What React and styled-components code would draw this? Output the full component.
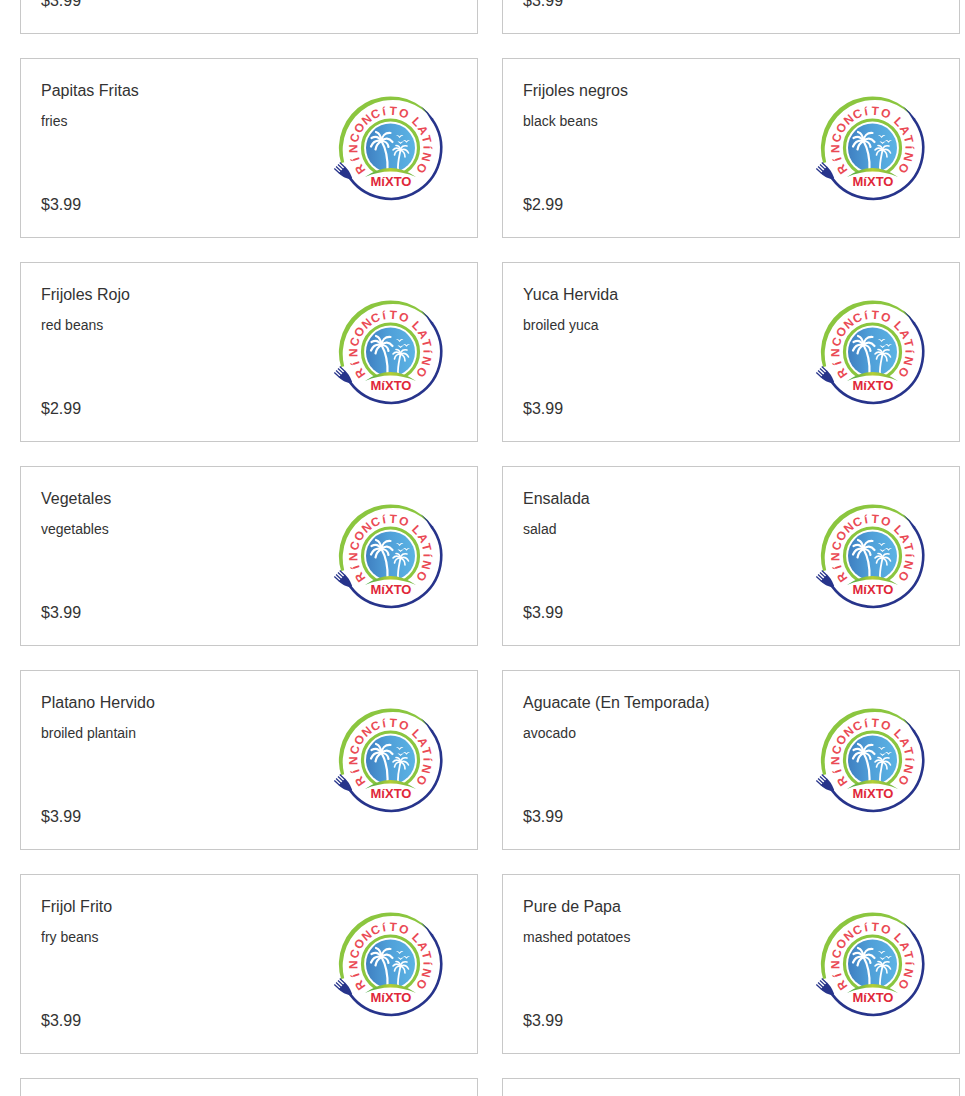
import React from "react";
import styled, { createGlobalStyle } from "styled-components";

const items = [
  { name: "", description: "", price: "$3.99", noLogo: true },
  { name: "", description: "", price: "$3.99", noLogo: true },
  { name: "Papitas Fritas", description: "fries", price: "$3.99" },
  { name: "Frijoles negros", description: "black beans", price: "$2.99" },
  { name: "Frijoles Rojo", description: "red beans", price: "$2.99" },
  { name: "Yuca Hervida", description: "broiled yuca", price: "$3.99" },
  { name: "Vegetales", description: "vegetables", price: "$3.99" },
  { name: "Ensalada", description: "salad", price: "$3.99" },
  { name: "Platano Hervido", description: "broiled plantain", price: "$3.99" },
  { name: "Aguacate (En Temporada)", description: "avocado", price: "$3.99" },
  { name: "Frijol Frito", description: "fry beans", price: "$3.99" },
  { name: "Pure de Papa", description: "mashed potatoes", price: "$3.99" },
  { name: "", description: "", price: "", noLogo: true },
  { name: "", description: "", price: "", noLogo: true },
];

// letter and its angle on the badge, clockwise from the top
const badgeLetters = [
  ["R", -125], ["í", -108], ["N", -91], ["C", -74], ["O", -57],
  ["N", -40], ["C", -24], ["í", -10], ["T", 4], ["O", 21],
  ["L", 45], ["A", 61], ["T", 76], ["í", 89], ["N", 104], ["O", 123],
];

function Logo({ id }) {
  return (
    <LogoSvg viewBox="0 0 120 120" role="img" aria-label="Rinconcito Latino Mixto">
      <defs>
        <linearGradient id={`sky-${id}`} x1="0" y1="0" x2="1" y2="0">
          <stop offset="0" stopColor="#3f7fc1" />
          <stop offset="0.45" stopColor="#4f9fd8" />
          <stop offset="1" stopColor="#5cb3e4" />
        </linearGradient>
        <linearGradient id={`hill-${id}`} x1="0" y1="0" x2="1" y2="0">
          <stop offset="0" stopColor="#3fa648" />
          <stop offset="0.5" stopColor="#b5cf35" />
          <stop offset="1" stopColor="#6cb544" />
        </linearGradient>
      </defs>

      {/* plate */}
      <path d="M10.1 75.1A51.7 51.7 0 0 1 97.9 25.4L97 26.2A50.2 50.2 0 0 0 13.2 74.3Z" fill="#8bc63f" />
      <path d="M89.9 18.2A51.7 51.7 0 0 1 102.4 31.1L100.2 32.5A60 60 0 0 0 89.9 18.2Z" fill="#27348b" />
      <path d="M100.8 31.1A50.4 50.4 0 1 1 16.8 86.7" fill="none" stroke="#27348b" strokeWidth="2.6" />

      {/* fork */}
      <g transform="translate(13 84) rotate(-47)" fill="#27348b">
        <path d="M-4.6 -3H4.6C4.6 3 3 6 1.2 10H-1.2C-3 6 -4.6 3 -4.6 -3Z" />
        <path d="M-4 -2V-9.5M-1.4 -2V-9.5M1.4 -2V-9.5M4 -2V-9.5" stroke="#27348b" strokeWidth="1.3" />
      </g>

      {/* island */}
      <circle cx="59.5" cy="60" r="28" fill="#fff" stroke="#8bc63f" strokeWidth="3.2" />
      <circle cx="59.5" cy="60" r="24.5" fill={`url(#sky-${id})`} />
      <g fill="none" stroke="#fff" strokeLinecap="round">
        <path d="M50.5 53C55 61 57 70 56.5 82" strokeWidth="2.2" />
        <path d="M69.5 62C68.5 68 66.5 74 67 82" strokeWidth="1.8" />
        <g strokeWidth="2.2">
          <path d="M50.5 53C48 49 45 47.5 40.5 50" />
          <path d="M50.5 53C46 52 42 54 40 58.5" />
          <path d="M50.5 53C47 55 45 58 44.5 61.5" />
          <path d="M50.5 53C50 48 48 45 45 44" />
          <path d="M50.5 53C51 48 54 44.5 59.5 45" />
          <path d="M50.5 53C54 49.5 58 50 61.5 54" />
          <path d="M50.5 53C54 53 57 55.5 57.5 59" />
        </g>
        <g strokeWidth="1.6">
          <path d="M69.5 62C67 59.5 64 59.5 62 62" />
          <path d="M69.5 62C66 62 64 64 63.5 67" />
          <path d="M69.5 62C69 59 67 57.5 65 57.5" />
          <path d="M69.5 62C70 58.5 73 57 76 58" />
          <path d="M69.5 62C73 60.5 76 62 77.5 65" />
          <path d="M69.5 62C72 63 74 65.5 74 69" />
        </g>
      </g>
      <g fill="#fff">
        <path d="M65 47Q67.5 46.5 68.5 48.5Q70 46.5 72.5 47.2Q70 48 68.5 50Q67.5 48 65 47Z" />
        <path d="M72 52Q74.5 51.5 75.5 53.2Q77 51.5 79 52Q77 52.8 75.5 54.8Q74.5 53 72 52Z" />
        <path d="M66.5 53.5Q68.5 53 69.5 54.5Q71 53 73 53.5Q71 54.2 69.5 56Q68.5 54.5 66.5 53.5Z" />
      </g>
      <path d="M33 91Q59.5 71 86 91Z" fill="#fff" />
      <path d="M34 89Q59.5 71 85 89Q59.5 78 34 89Z" fill={`url(#hill-${id})`} />

      {badgeLetters.map(([letter, angle]) => (
        <RingLetter key={angle} x="59.5" y="27" transform={`rotate(${angle} 59.5 60)`}>
          {letter}
        </RingLetter>
      ))}
      <Mixto x="60" y="98">MíXTO</Mixto>
    </LogoSvg>
  );
}

export default function App() {
  return (
    <Page>
      <GlobalStyle />
      <MenuGrid>
        {items.map((item, i) => (
          <Card key={i}>
            <Details>
              <Name>{item.name}</Name>
              <Description>{item.description}</Description>
              <Price>{item.price}</Price>
            </Details>
            {!item.noLogo && <Logo id={i} />}
          </Card>
        ))}
      </MenuGrid>
    </Page>
  );
}

const GlobalStyle = createGlobalStyle`
  body {
    margin: 0;
    background: #fff;
    color: #333;
    font-family: "Liberation Sans", Arial, sans-serif;
  }
`;

const Page = styled.main`
  height: 100vh;
  overflow: hidden;
`;

/* the list is scrolled part way through its first row */
const MenuGrid = styled.div`
  display: grid;
  grid-template-columns: 1fr 1fr;
  grid-auto-rows: 180px;
  gap: 24px;
  margin-top: -146px;
  padding: 0 5px 0 20px;
`;

const Card = styled.article`
  display: flex;
  align-items: center;
  justify-content: space-between;
  box-sizing: border-box;
  padding: 20px 26px 20px 20px;
  border: 1px solid #c8c8c8;
`;

const Details = styled.div`
  display: flex;
  flex-direction: column;
  height: 100%;
`;

const Name = styled.h3`
  margin: 0 0 8px;
  min-height: 24px;
  font-size: 16px;
  font-weight: 400;
  line-height: 24px;
`;

const Description = styled.p`
  margin: 0;
  font-size: 14px;
  line-height: 20px;
`;

const Price = styled.span`
  margin-top: auto;
  font-size: 16px;
  line-height: 24px;
`;

const LogoSvg = styled.svg`
  flex: none;
  width: 120px;
  height: 120px;
`;

const RingLetter = styled.text`
  fill: #ea4a54;
  font-size: 12px;
  font-weight: 700;
  text-anchor: middle;
`;

const Mixto = styled.text`
  fill: #e0283a;
  font-size: 13px;
  font-weight: 700;
  text-anchor: middle;
`;
